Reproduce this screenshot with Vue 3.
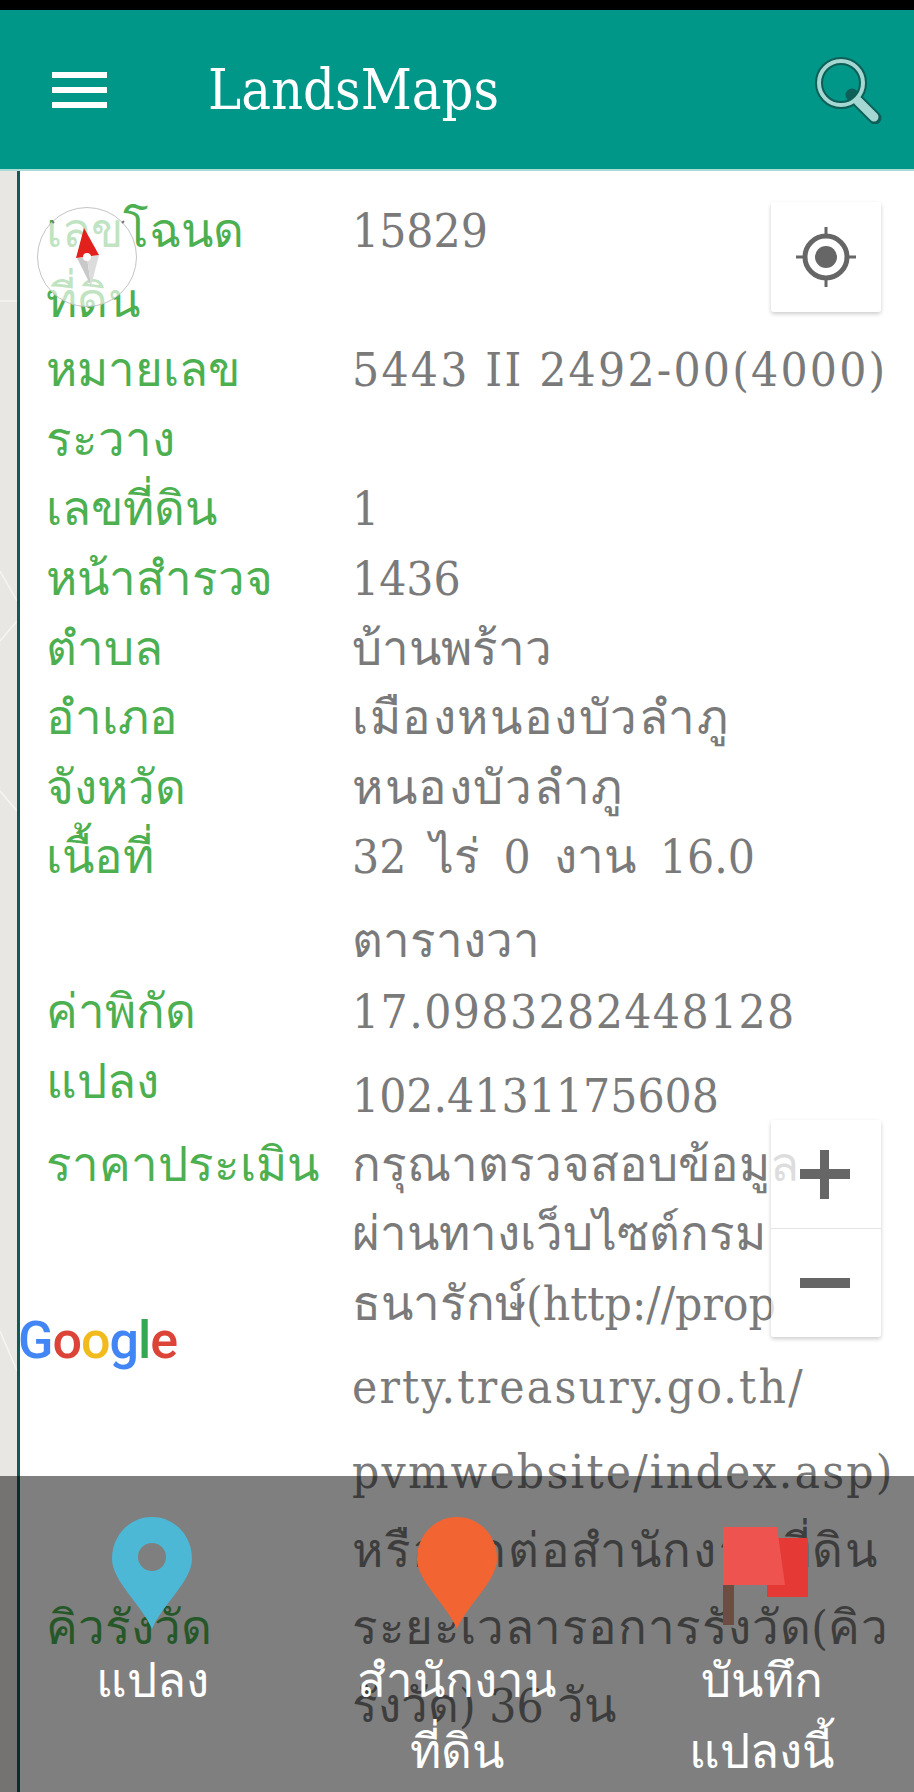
<template>
  <div class="screen">
    <div class="status"></div>
    <header class="topbar">
      <div class="burger"><i></i><i></i><i></i></div>
      <div class="title">LandsMaps</div>
      <svg class="search" viewBox="0 0 68 68" width="68" height="68">
        <path d="M38 39 L61 62" stroke="#0d5f57" stroke-width="13" stroke-linecap="round" />
        <circle cx="27" cy="27" r="22" fill="none" stroke="#0d5f57" stroke-width="8" />
        <circle cx="27" cy="27" r="22" fill="none" stroke="#a5d8d2" stroke-width="4" />
        <path d="M44 45 L60 61" stroke="#a5d8d2" stroke-width="9" stroke-linecap="round" />
      </svg>
    </header>

    <div class="body">
      <div class="strip">
        <svg viewBox="0 0 17 1620" width="17" height="1620">
          <path d="M0 130 H17 M0 470 L17 450 M0 400 L17 430 M0 620 L17 640 M0 1160 L17 1200" stroke="#f6f5f3" stroke-width="1.5" fill="none" />
        </svg>
      </div>
      <div class="details">
        <div v-for="row in rows" :key="row.label[0]" class="row">
          <div class="label">
            <div v-for="l in row.label" :key="l" class="line">{{ l }}</div>
          </div>
          <div class="value">
            <div v-for="v in row.value" :key="v.t" class="line" :class="v.c">{{ v.t }}</div>
          </div>
        </div>
      </div>
    </div>

    <!-- map controls lying over the details -->
    <div class="compass">
      <svg viewBox="0 0 100 100" width="100" height="100">
        <path d="M14 13l2 2M86 13l-2 2" stroke="#777" stroke-width="2" />
        <polygon points="39,50 49,49 53,78" fill="#c9c9c9" />
        <polygon points="49,49 61,47 53,78" fill="#dcdcdc" />
        <polygon points="46,20 61,47 38,50" fill="#e2201c" />
        <circle cx="49" cy="49" r="4" fill="#fff" />
      </svg>
    </div>

    <div class="map-btn locate">
      <svg viewBox="0 0 60 60" width="60" height="60">
        <circle cx="30" cy="30" r="21" fill="none" stroke="#666" stroke-width="5" />
        <circle cx="30" cy="30" r="11" fill="#666" />
        <path d="M30 0V9 M30 51V60 M0 30H9 M51 30H60" stroke="#666" stroke-width="3" />
      </svg>
    </div>

    <div class="map-btn zoom">
      <div class="zoom-cell"><i class="h"></i><i class="v"></i></div>
      <div class="zoom-cell"><i class="h"></i></div>
    </div>

    <div class="google">
      <span class="b">G</span><span class="r">o</span><span class="y">o</span><span class="b">g</span><span class="g">l</span><span class="r">e</span>
    </div>

    <nav class="actions">
      <div class="action">
        <svg viewBox="0 0 80 112" width="80" height="112">
          <path fill-rule="evenodd" fill="#4db8d6" d="M40 0C62 0 80 18 80 42C80 64 50 88 40 112C30 88 0 64 0 42C0 18 18 0 40 0ZM40 26A14 14 0 1 0 40 54A14 14 0 1 0 40 26Z" />
        </svg>
        <div class="action-text">แปลง</div>
      </div>
      <div class="action">
        <svg viewBox="0 0 80 112" width="80" height="112">
          <path fill="#f26532" d="M40 0C62 0 80 18 80 42C80 64 50 88 40 112C30 88 0 64 0 42C0 18 18 0 40 0Z" />
        </svg>
        <div class="action-text">สำนักงาน<br />ที่ดิน</div>
      </div>
      <div class="action">
        <svg viewBox="-1 0 92 112" width="92" height="112">
          <rect x="6" y="68" width="11" height="40" fill="#6d4c41" />
          <rect x="50" y="21" width="41" height="59" fill="#e53935" />
          <polygon points="6,10 60,10 68,68 6,68" fill="#ef5350" />
        </svg>
        <div class="action-text">บันทึก<br />แปลงนี้</div>
      </div>
    </nav>
  </div>
</template>

<script setup>
const rows = [
  { label: ['เลขโฉนด', 'ที่ดิน'], value: [{ t: '15829' }] },
  { label: ['หมายเลข', 'ระวาง'], value: [{ t: '5443 II 2492-00(4000)', c: 'latin' }] },
  { label: ['เลขที่ดิน'], value: [{ t: '1' }] },
  { label: ['หน้าสำรวจ'], value: [{ t: '1436' }] },
  { label: ['ตำบล'], value: [{ t: 'บ้านพร้าว' }] },
  { label: ['อำเภอ'], value: [{ t: 'เมืองหนองบัวลำภู', c: 'thai-wide' }] },
  { label: ['จังหวัด'], value: [{ t: 'หนองบัวลำภู', c: 'thai-wide' }] },
  { label: ['เนื้อที่'], value: [{ t: '32 ไร่ 0 งาน 16.0', c: 'spaced' }, { t: 'ตารางวา', c: 'tall' }] },
  {
    label: ['ค่าพิกัด', 'แปลง'],
    value: [{ t: '17.0983282448128', c: 'digits' }, { t: '102.4131175608', c: 'tall short' }]
  },
  {
    label: ['ราคาประเมิน'],
    value: [
      { t: 'กรุณาตรวจสอบข้อมูล' },
      { t: 'ผ่านทางเว็บไซต์กรม' },
      { t: 'ธนารักษ์(http://prop' },
      { t: 'erty.treasury.go.th/', c: 'tall latin' },
      { t: 'pvmwebsite/index.asp)', c: 'tall latin' },
      { t: 'หรือติดต่อสำนักงานที่ดิน', c: 'plain thai-wide' }
    ]
  },
  {
    label: ['คิวรังวัด'],
    value: [
      { t: 'ระยะเวลารอการรังวัด(คิว', c: 'slight' },
      { t: 'รังวัด) 36 วัน', c: 'plain' }
    ]
  }
]
</script>

<style>
html, body {
  margin: 0;
  background: #000;
}
</style>

<style scoped>
.screen {
  position: relative;
  width: 914px;
  height: 1792px;
  overflow: hidden;
  background: #fff;
  font-family: "DejaVu Serif Condensed", "DejaVu Serif", serif;
  font-stretch: condensed;
}

.status {
  height: 10px;
  background: #000;
}

.topbar {
  height: 161px;
  box-sizing: border-box;
  background: #009688;
  border-bottom: 2px solid #a8dcd6;
  display: flex;
  align-items: center;
  padding: 0 32px 0 52px;
  color: #fff;
}

.burger {
  width: 55px;
  display: flex;
  flex-direction: column;
  gap: 9px;
}

.burger i {
  display: block;
  height: 6px;
  background: #fff;
}

.title {
  flex: 1;
  margin-left: 101px;
  font-size: 55.5px;
}

.body {
  display: flex;
  height: 1621px;
}

.strip {
  width: 17px;
  background: #e9e7e3;
  border-right: 3px solid #0f5c54;
  flex: none;
}

.details {
  flex: 1;
  padding: 25px 0 0 26px;
  font-size: 47.5px;
}

.row {
  display: flex;
}

.label {
  width: 306px;
  flex: none;
  color: #4caf50;
}

.value {
  color: #7a7a7a;
  white-space: nowrap;
}

.line {
  height: 69.6px;
  line-height: 70px;
}

.line.tall {
  height: 85px;
  line-height: 97px;
}

.line.short {
  height: 83px;
}

.line.plain {
  height: 85px;
  line-height: 85px;
}

.latin {
  letter-spacing: 2.2px;
}

.digits {
  letter-spacing: 1.4px;
}

.thai-wide {
  letter-spacing: 1.6px;
}

.slight {
  letter-spacing: 0.6px;
}

.spaced {
  word-spacing: 10px;
}

.compass {
  position: absolute;
  left: 37px;
  top: 207px;
  width: 98px;
  height: 98px;
  border-radius: 50%;
  border: 1px solid #c4c4c4;
  background: rgba(255, 255, 255, 0.65);
}

.compass svg {
  display: block;
}

.map-btn {
  position: absolute;
  left: 771px;
  width: 110px;
  background: rgba(255, 255, 255, 0.75);
  border-radius: 3px;
  box-shadow: 0 2px 4px rgba(0, 0, 0, 0.2);
}

.locate {
  top: 202px;
  height: 110px;
  display: flex;
  align-items: center;
  justify-content: center;
}

.zoom {
  top: 1120px;
}

.zoom-cell {
  position: relative;
  height: 108px;
}

.zoom-cell + .zoom-cell {
  border-top: 1px solid #e3e3e3;
}

.zoom-cell i {
  position: absolute;
  background: #666;
}

.zoom-cell .h {
  left: 29px;
  top: 49px;
  width: 50px;
  height: 10px;
}

.zoom-cell .v {
  left: 49px;
  top: 30px;
  width: 9px;
  height: 49px;
}

.google {
  position: absolute;
  left: 18px;
  top: 1310px;
  font-family: Roboto, sans-serif;
  font-stretch: normal;
  font-weight: 500;
  font-size: 52px;
  letter-spacing: -1px;
}

.b { color: #4285f4; }
.r { color: #dd4438; }
.y { color: #f2bb1d; }
.g { color: #34a853; }

.actions {
  position: absolute;
  left: 0;
  right: 0;
  bottom: 0;
  height: 316px;
  padding-top: 41px;
  box-sizing: border-box;
  background: rgba(0, 0, 0, 0.5);
  display: grid;
  grid-template-columns: repeat(3, 1fr);
}

.action {
  display: flex;
  flex-direction: column;
  align-items: center;
  color: #fff;
  font-size: 47.5px;
}

.action svg {
  display: block;
}

.action-text {
  margin-top: 16px;
  text-align: center;
  line-height: 71px;
}
</style>
